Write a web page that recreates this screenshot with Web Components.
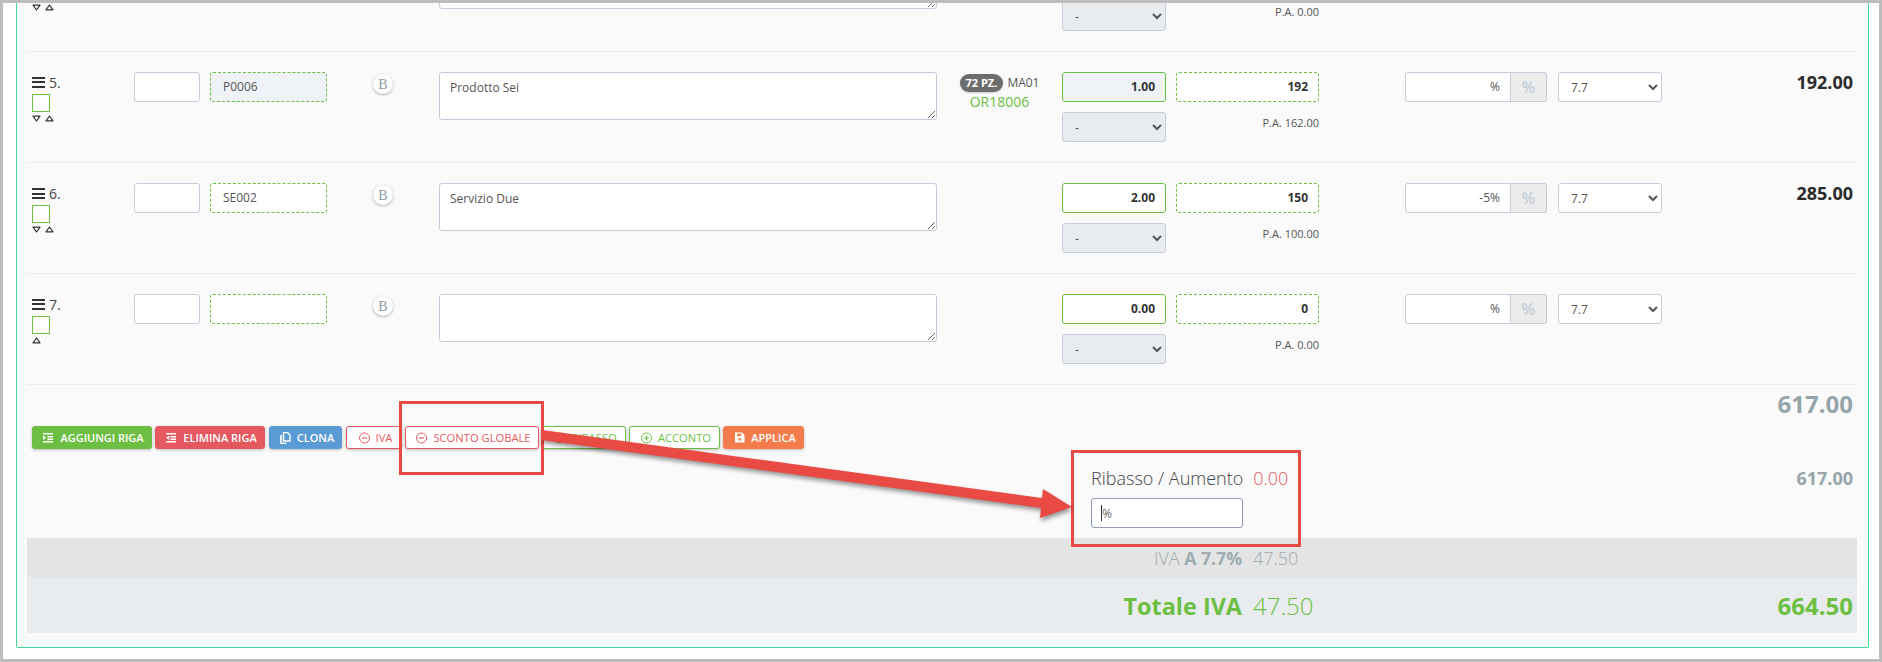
<!DOCTYPE html>
<html lang="it">
<head>
<meta charset="utf-8">
<title>Documento</title>
<style>
    html, body { margin: 0; height: 662px; overflow: hidden; background: #bdbdbd; }
    body { font-family: "Open Sans", "Liberation Sans", sans-serif; font-size: 12px; color: #444; }
</style>
</head>
<body>
<app-sheet>
    <doc-row num="4" up down pa="0.00" hidden-top></doc-row>
    <doc-row num="5" code="P0006" code-locked desc="Prodotto Sei" qty="1.00" qty-locked price="192" pa="162.00" total="192.00" up down stock="72 PZ." store="MA01" order="OR18006"></doc-row>
    <doc-row num="6" code="SE002" desc="Servizio Due" qty="2.00" price="150" pa="100.00" disc="-5%" total="285.00" up down></doc-row>
    <doc-row num="7" qty="0.00" price="0" pa="0.00" up></doc-row>
    <doc-footer>
        <tool-btn slot="tools" style="width:120px" kind="green" icon="indent">Aggiungi riga</tool-btn>
        <tool-btn slot="tools" style="width:110px" kind="red" icon="outdent">Elimina riga</tool-btn>
        <tool-btn slot="tools" style="width:73px;margin:0 1px" kind="blue" icon="copy">Clona</tool-btn>
        <tool-btn slot="tools" style="width:56px" kind="red" outline icon="minus">IVA</tool-btn>
        <tool-btn slot="tools" style="width:134px" kind="red" outline icon="minus">Sconto globale</tool-btn>
        <tool-btn slot="tools" style="width:84px" kind="green" outline icon="minus">Ribasso</tool-btn>
        <tool-btn slot="tools" style="width:91px" kind="green" outline icon="plus">Acconto</tool-btn>
        <tool-btn slot="tools" style="width:81px" kind="orange" icon="save">Applica</tool-btn>
    </doc-footer>
    <sum-band tone="grey" value="47.50">IVA <b>A 7.7%</b></sum-band>
    <sum-band tone="blue" value="47.50" total="664.50"><b>Totale IVA</b></sum-band>
</app-sheet>
<script>
const ICONS = {
    indent: `<path d="M0 1h10v1.6H0zM4.5 4h5.5v1.5H4.5zM4.5 6.5h5.5V8H4.5zM0 9h10v1.6H0zM0 3.6l3 2.2L0 8z" fill="currentColor"/>`,
    outdent: `<path d="M0 1h10v1.6H0zM4.5 4h5.5v1.5H4.5zM4.5 6.5h5.5V8H4.5zM0 9h10v1.6H0zM3.4 3.6v4.4L0 5.8z" fill="currentColor"/>`,
    copy: `<path d="M3.5.5h4l2.5 2.5v6H3.5z" fill="none" stroke="currentColor" stroke-width="1.4"/><path d="M1 3v8.5h5.5" fill="none" stroke="currentColor" stroke-width="1.6"/>`,
    minus: `<circle cx="5.5" cy="6" r="5" fill="none" stroke="currentColor" stroke-width="1"/><path d="M3 6h5" stroke="currentColor" stroke-width="1.2"/>`,
    plus: `<circle cx="5.5" cy="6" r="5" fill="none" stroke="currentColor" stroke-width="1"/><path d="M3 6h5M5.5 3.5v5" stroke="currentColor" stroke-width="1.2"/>`,
    save: `<path fill-rule="evenodd" d="M1 .5h7l2.5 2.5v7.5H1zM3 1.8v2.4h4.2V1.8zM5.7 6a1.4 1.4 0 1 0 0 2.8 1.4 1.4 0 0 0 0-2.8z" fill="currentColor"/>`
};

class AppSheet extends HTMLElement {
    constructor() {
        super();
        this.attachShadow({ mode: "open" });
        this.shadowRoot.innerHTML = `
        <style>
        :host { display: block; position: relative; height: 656px; padding: 3px; overflow: hidden; }
        .sheet { height: 656px; box-sizing: border-box; background: #fff; padding: 0 10px 11px 13px; overflow: hidden; }
        .panel {
            height: 645px; box-sizing: border-box; background: #fafafa;
            border: 1px solid #3ddc97; border-top: 0; border-radius: 0 0 2px 2px;
            padding: 0 11px 14px 10px; overflow: hidden;
        }
        .scroll { margin-top: -62px; }
        svg { position: absolute; left: 0; top: 0; pointer-events: none; }
        .arrow { filter: drop-shadow(1px 3px 2px rgba(0,0,0,.4)); }
        </style>
        <div class="sheet"><div class="panel"><div class="scroll"><slot></slot></div></div></div>
        <svg width="1882" height="662" viewBox="0 0 1882 662">
            <rect x="400.5" y="402.5" width="142" height="71" fill="none" stroke="#ea4a44" stroke-width="3"/>
            <rect x="1072.5" y="451.5" width="227" height="94" fill="none" stroke="#ea4a44" stroke-width="3"/>
            <polygon class="arrow" fill="#ea4a44" points="542,430 1042,498 1043,489 1072,507 1040,518 1041,508 541,440"/>
        </svg>
        `;
    }
}

class FieldBox extends HTMLElement {
    constructor() {
        super();
        this.attachShadow({ mode: "open" });
        this.shadowRoot.innerHTML = `
        <style>
        :host {
            display: block; box-sizing: border-box; height: 30px; line-height: 28px;
            padding: 0 10px 0 12px; background: #fff; color: #555; font-size: 12px;
            border: 1px solid #c4ccdb; border-radius: 3px; overflow: hidden; white-space: nowrap;
        }
        :host([end]) { text-align: right; }
        :host([bold]) { font-weight: 700; color: #333; }
        :host([locked]) { background: #eff2f7; }
        :host([green]) { border-color: #6cbf3f; }
        :host([dashed]) { border: 1px dashed #6cbf3f; }
        </style>
        <slot></slot>
        `;
    }
}

class DocRow extends HTMLElement {
    constructor() {
        super();
        this.attachShadow({ mode: "open" });
    }

    connectedCallback() {
        const a = (n, d = "") => this.hasAttribute(n) ? this.getAttribute(n) : d;
        const tri = (up) => `<svg width="9" height="7" viewBox="0 0 9 7"><path d="${up ? "M4.5 1L8 5.8H1z" : "M1 1.2h7L4.5 6z"}" fill="none" stroke="#333" stroke-width="1.2" stroke-linejoin="round"/></svg>`;
        // the row scrolled past the top edge only shows its lower half
        const top = this.hasAttribute("hidden-top");
        this.shadowRoot.innerHTML = `
        <style>
        :host {
            display: grid; box-sizing: border-box; height: 111px; padding: 20px 4px 0 5px;
            grid-template-columns: 102px 76px 117px 112px 498px 125px 114px 229px 153px 104px 1fr;
            align-items: start; border-bottom: 1px solid #ececec; color: #444;
        }
        .num { display: flex; align-items: center; gap: 4px; height: 20px; font-size: 14px; color: #444; }
        .burger { width: 13px; height: 11px; background: linear-gradient(#333 0 2px, transparent 2px 4.5px, #333 4.5px 6.5px, transparent 6.5px 9px, #333 9px 11px); }
        .check { width: 18px; height: 18px; box-sizing: border-box; border: 1px solid #6cbf3f; background: #fff; margin-top: 2px; }
        .tris { display: flex; gap: 4px; margin-top: 3px; height: 8px; }
        .tris svg { display: block; }
        .w66 { width: 66px; }
        .mark {
            justify-self: center; width: 20px; height: 20px; margin-top: 2px; border-radius: 50%; background: #fff;
            box-shadow: 0 1px 3px rgba(0,0,0,.3); text-align: center;
            font: 400 14px/22px "Liberation Serif", serif; color: #8f9ba3;
        }
        textarea {
            display: block; box-sizing: border-box; width: 498px; height: 48px; margin: 0; padding: 6px 10px;
            border: 1px solid #c4ccdb; border-radius: 3px; background: #fff; color: #555;
            font: 12px/18px "Open Sans", sans-serif; outline: 0;
        }
        .stock { text-align: center; padding-top: 2px; font-size: 12px; color: #555; white-space: nowrap; }
        .badge {
            display: inline-block; height: 18px; line-height: 18px; padding: 0 6px; margin-right: 4px; border-radius: 9px;
            background: #6d6d6d; color: #fff; font-weight: 700; font-size: 11px; box-shadow: 0 1px 2px rgba(0,0,0,.2);
        }
        .order { display: block; color: #6cbf3f; font-size: 14px; line-height: 18px; margin-top: 1px; }
        .w104 { width: 104px; }
        select {
            display: block; box-sizing: border-box; width: 104px; height: 30px; margin: 0; padding: 0 8px;
            border: 1px solid #c4ccdb; border-radius: 3px; font: 12px "Open Sans", sans-serif; color: #555; outline: 0;
        }
        select.grey { background: #e9ecef; margin-top: 10px; }
        select.white { background: #fff; }
        .pa { text-align: right; font-size: 11px; line-height: 16px; margin-top: 13px; color: #555; }
        .price { width: 143px; }
        .disc { display: flex; width: 142px; }
        .disc field-box { width: 106px; border-radius: 3px 0 0 3px; }
        .addon {
            width: 36px; height: 30px; box-sizing: border-box; line-height: 28px; text-align: center; font-size: 16px; font-weight: 600;
            background: #ececec; color: #c5ccd8; border: 1px solid #c4ccdb; border-left: 0; border-radius: 0 3px 3px 0;
        }
        .total { text-align: right; font-weight: 700; font-size: 18px; line-height: 20px; color: #2b2b2b; }
        </style>
        <div>
            <div class="num"><span class="burger"></span>${top ? "" : a("num") + "."}</div>
            <div class="check"></div>
            <div class="tris">${this.hasAttribute("down") ? tri(false) : ""}${tri(true)}</div>
        </div>
        <field-box class="w66"></field-box>
        <field-box dashed ${this.hasAttribute("code-locked") ? "locked" : ""}>${a("code")}</field-box>
        ${top ? "<div></div>" : `<div class="mark">B</div>`}
        <textarea>${a("desc")}</textarea>
        <div class="stock">${this.hasAttribute("stock") ? `<span class="badge">${a("stock")}</span>${a("store")}<span class="order">${a("order")}</span>` : ""}</div>
        <div>
            <field-box class="w104" green end bold ${this.hasAttribute("qty-locked") ? "locked" : ""}>${a("qty")}</field-box>
            <select class="grey"><option>-</option></select>
        </div>
        <div>
            <field-box class="price" dashed end bold>${a("price")}</field-box>
            <div class="pa price">P.A. ${a("pa")}</div>
        </div>
        ${top ? "" : `
        <div class="disc"><field-box end>${a("disc", "%")}</field-box><div class="addon">%</div></div>
        <select class="white"><option>7.7</option></select>
        <div class="total">${a("total")}</div>`}
        `;
    }
}

class ToolBtn extends HTMLElement {
    constructor() {
        super();
        this.attachShadow({ mode: "open" });
        const colors = { green: "#6cbf43", red: "#e5585f", blue: "#5b9bd5", orange: "#f47c4c" };
        this.style.setProperty("--c", colors[this.getAttribute("kind")]);
        this.shadowRoot.innerHTML = `
        <style>
        :host {
            display: inline-flex; align-items: center; justify-content: center; gap: 6px; box-sizing: border-box; height: 23px; padding-left: 3px;
            background: var(--c); color: #fff; border: 1px solid var(--c); border-radius: 3px;
            font-size: 11px; font-weight: 600; text-transform: uppercase; white-space: nowrap;
            box-shadow: 0 1px 3px rgba(0,0,0,.25);
        }
        :host([outline]) { background: #fff; color: var(--c); font-weight: 400; font-size: 11.2px; }
        svg { display: block; flex: none; }
        </style>
        <svg width="11" height="12" viewBox="0 0 11 12">${ICONS[this.getAttribute("icon")]}</svg>
        <slot></slot>
        `;
    }
}

class DocFooter extends HTMLElement {
    constructor() {
        super();
        this.attachShadow({ mode: "open" });
        this.shadowRoot.innerHTML = `
        <style>
        :host {
            display: grid; box-sizing: border-box; height: 153px; padding-right: 4px;
            grid-template-columns: 1064px 161px 1fr; grid-template-rows: 80px 1fr; color: #95a5ab;
        }
        .tools { grid-column: 1 / span 2; display: flex; gap: 3px; padding: 41px 0 0 5px; align-items: flex-start; }
        .big { text-align: right; font-weight: 700; font-size: 24px; line-height: 33px; padding-top: 2px; }
        .spacer { grid-column: 1; }
        .rib-label { display: flex; gap: 10px; font-weight: 300; font-size: 18px; line-height: 26px; color: #444; white-space: nowrap; }
        .rib-label em { font-style: normal; color: #e5585f; }
        .rib-input {
            display: flex; align-items: center; box-sizing: border-box; width: 152px; height: 30px; margin-top: 7px; padding-left: 9px;
            background: #fff; border: 1px solid #8f9bb8; border-radius: 3px; font-size: 12px; color: #666;
        }
        .caret { width: 1px; height: 16px; background: #333; }
        .small { text-align: right; font-weight: 700; font-size: 18px; line-height: 26px; }
        </style>
        <div class="tools"><slot name="tools"></slot></div>
        <div class="big">617.00</div>
        <div class="spacer"></div>
        <div>
            <div class="rib-label">Ribasso / Aumento <em>0.00</em></div>
            <div class="rib-input"><span class="caret"></span>%</div>
        </div>
        <div class="small">617.00</div>
        `;
    }
}

class SumBand extends HTMLElement {
    constructor() {
        super();
        this.attachShadow({ mode: "open" });
    }

    connectedCallback() {
        this.shadowRoot.innerHTML = `
        <style>
        :host {
            display: grid; grid-template-columns: 1215px auto 1fr; align-items: center; padding-right: 4px;
            height: 39px; background: #e4e4e4; color: #9eacb2; font-weight: 300; font-size: 18px;
        }
        :host([tone="blue"]) { height: 56px; background: #e9ecef; color: #6cbf43; font-size: 24px; }
        :host([tone="blue"]) ::slotted(b) { font-size: 23.4px; }
        .label { text-align: right; white-space: nowrap; }
        .value { margin-left: 11px; }
        .total { text-align: right; font-weight: 700; }
        ::slotted(b) { font-weight: 700; font-size: 17.6px; }
        </style>
        <div class="label"><slot></slot></div>
        <div class="value">${this.getAttribute("value")}</div>
        <div class="total">${this.getAttribute("total") || ""}</div>
        `;
    }
}

customElements.define("field-box", FieldBox);
customElements.define("tool-btn", ToolBtn);
customElements.define("doc-row", DocRow);
customElements.define("doc-footer", DocFooter);
customElements.define("sum-band", SumBand);
customElements.define("app-sheet", AppSheet);
</script>
</body>
</html>
